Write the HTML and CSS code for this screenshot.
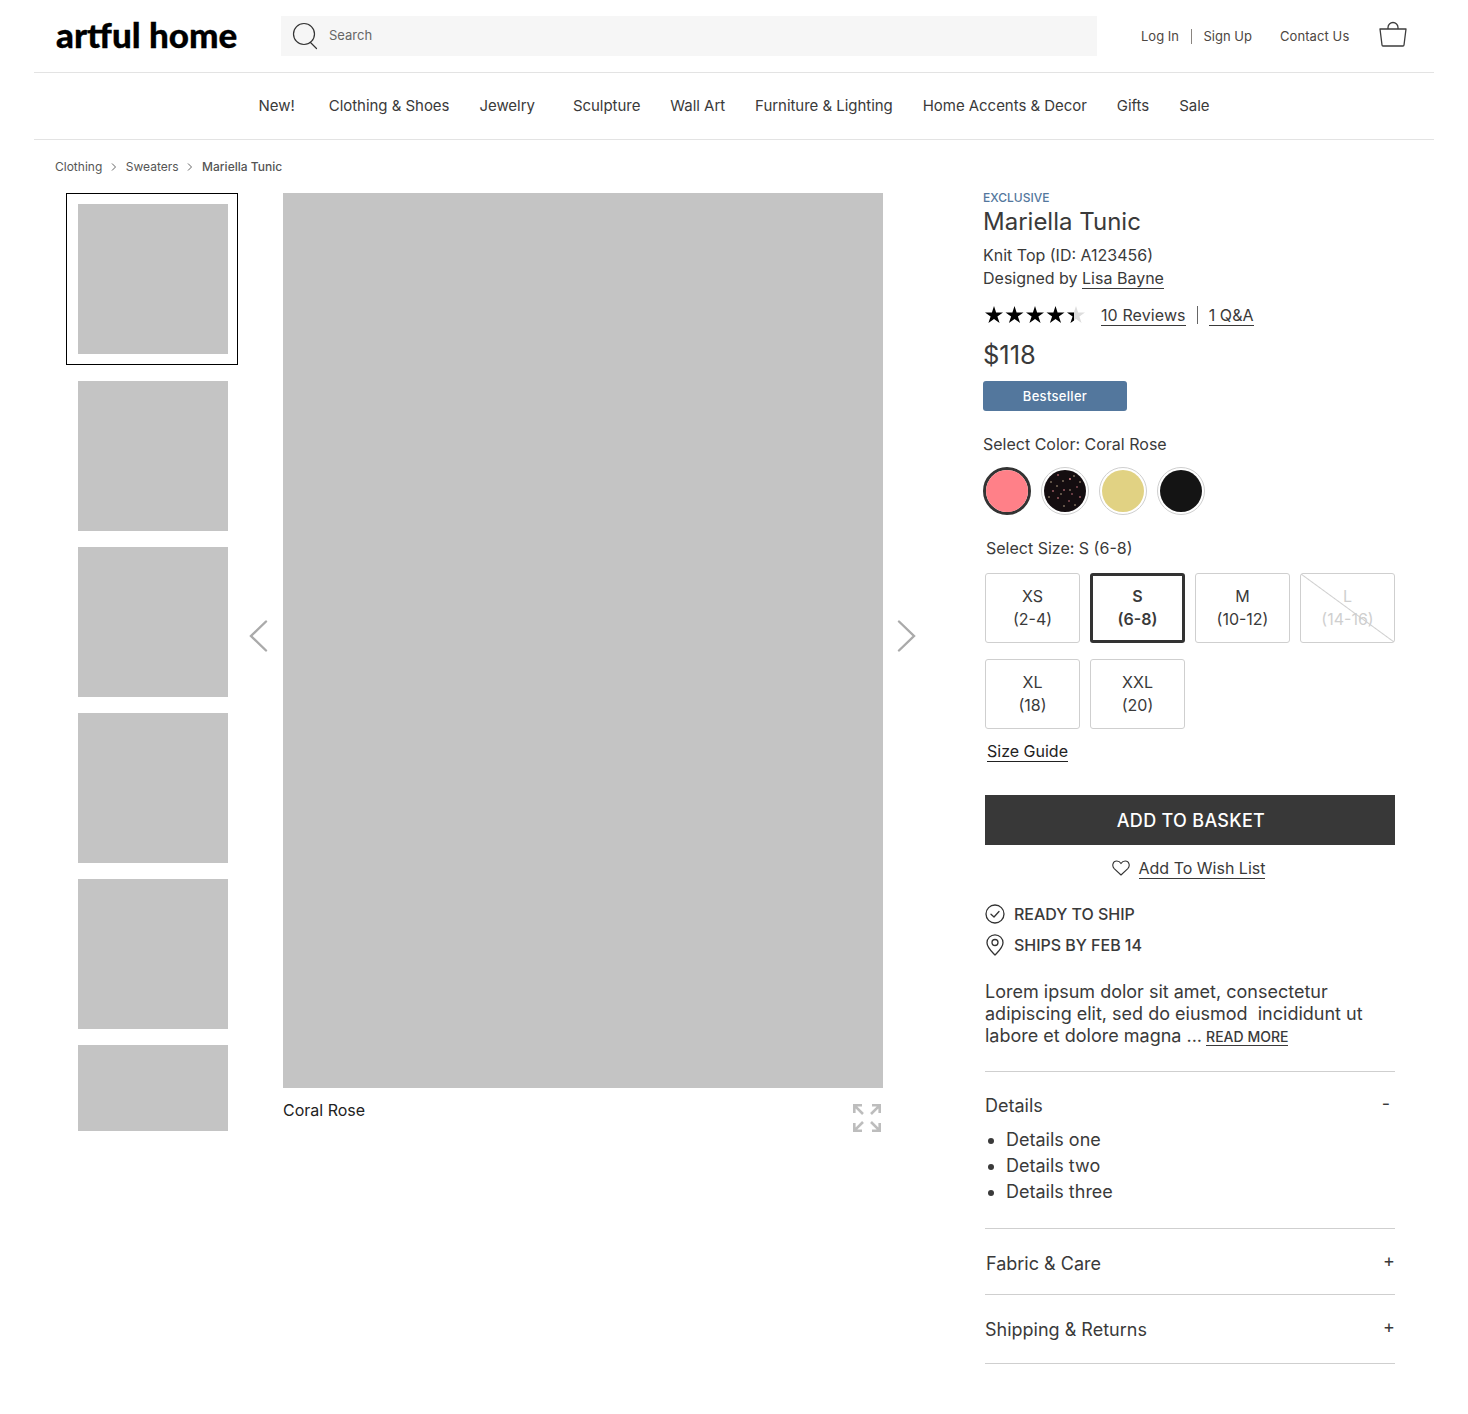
FILE: index.html
```html
<!DOCTYPE html>
<html lang="en">
<head>
    <meta name="viewport" content="width=device-width, initial-scale=1.0">
    <meta charset="UTF-8">
    <title>Mariella Tunic - artful home</title>
    <link rel="stylesheet" href="styles.css">
</head>
<body>

<!-- Header -->
<header class="site-header">
    <div class="top-bar">
        <a class="logo" href="#">artful home</a>
        <div class="search">
            <svg class="search-icon" width="26" height="28" viewBox="0 0 26 28" fill="none" stroke="#333" stroke-width="1.2">
                <circle cx="12" cy="12" r="10.5"/>
                <path d="M18.5 20.5 L24.5 26.5" stroke-linecap="round"/>
            </svg>
            <span>Search</span>
        </div>
        <div class="account-links">
            <a href="#">Log In</a>
            <span class="account-divider"></span>
            <a href="#">Sign Up</a>
            <a class="contact-link" href="#">Contact Us</a>
        </div>
        <svg class="bag-icon" width="28" height="26" viewBox="0 0 28 26" fill="none" stroke="#3d3d3d" stroke-width="1.3" stroke-linejoin="round">
            <path d="M1 8 H27 L25 24 Q24.900 25 24 25 H4 Q3.100 25 3 24 Z"/>
            <path d="M9 8 V6.500 A5 5 0 0 1 19 6.500 V8"/>
        </svg>
    </div>
    <nav class="main-nav">
        <a class="nav-new" href="#">New!</a>
        <a href="#">Clothing &amp; Shoes</a>
        <a class="nav-jewelry" href="#">Jewelry</a>
        <a href="#">Sculpture</a>
        <a href="#">Wall Art</a>
        <a href="#">Furniture &amp; Lighting</a>
        <a href="#">Home Accents &amp; Decor</a>
        <a href="#">Gifts</a>
        <a href="#">Sale</a>
    </nav>
</header>

<!-- Breadcrumb -->
<div class="breadcrumb">
    <a href="#">Clothing</a>
    <svg width="6" height="8" viewBox="0 0 6 8" fill="none" stroke="#666"><path d="M1 0.500 L4.500 4 L1 7.500"/></svg>
    <a href="#">Sweaters</a>
    <svg width="6" height="8" viewBox="0 0 6 8" fill="none" stroke="#666"><path d="M1 0.500 L4.500 4 L1 7.500"/></svg>
    <span class="breadcrumb-current">Mariella Tunic</span>
</div>

<main class="product">
    <!-- Thumbnails -->
    <div class="thumbs">
        <div class="thumb thumb-selected"><div class="thumb-img"></div></div>
        <div class="thumb"><div class="thumb-img"></div></div>
        <div class="thumb"><div class="thumb-img"></div></div>
        <div class="thumb"><div class="thumb-img"></div></div>
        <div class="thumb"><div class="thumb-img"></div></div>
        <div class="thumb"><div class="thumb-img"></div></div>
    </div>

    <!-- Main image -->
    <div class="gallery">
        <div class="gallery-row">
            <svg class="arrow arrow-prev" width="20" height="32" viewBox="0 0 20 32" fill="none" stroke="#aaa" stroke-width="2.4" stroke-linecap="round">
                <path d="M17 1.500 L2 16 L17 30.500"/>
            </svg>
            <div class="gallery-img"></div>
            <svg class="arrow arrow-next" width="20" height="32" viewBox="0 0 20 32" fill="none" stroke="#aaa" stroke-width="2.4" stroke-linecap="round">
                <path d="M3 1.500 L18 16 L3 30.500"/>
            </svg>
        </div>
        <div class="gallery-caption">
            <span>Coral Rose</span>
            <svg width="28" height="28" viewBox="0 0 28 28" fill="none" stroke="#bdbdbd" stroke-width="2.6">
                <path d="M1.300 9 V1.300 H9 M1.300 1.300 L10 10"/>
                <path d="M19 1.300 H26.700 V9 M26.700 1.300 L18 10"/>
                <path d="M1.300 19 V26.700 H9 M1.300 26.700 L10 18"/>
                <path d="M19 26.700 H26.700 V19 M26.700 26.700 L18 18"/>
            </svg>
        </div>
    </div>

    <!-- Product info -->
    <section class="info">
        <div class="info-top">
            <div class="eyebrow">EXCLUSIVE</div>
            <h1 class="title">Mariella Tunic</h1>
            <div class="meta meta-first">Knit Top (ID: A123456)</div>
            <div class="meta">Designed by <a class="link" href="#">Lisa Bayne</a></div>
            <div class="rating">
                <svg class="stars" width="102" height="18" viewBox="0 0 102 18">
                    <defs>
                        <clipPath id="half-star"><rect x="82" y="0" width="7" height="18"/></clipPath>
                    </defs>
                    <path d="M9 0 L11.100 6.400 H18 L12.400 10.400 L14.600 17 L9 13 L3.400 17 L5.600 10.400 L0 6.400 H6.900 Z" fill="#000"/>
                    <path transform="translate(20.500 0)" d="M9 0 L11.100 6.400 H18 L12.400 10.400 L14.600 17 L9 13 L3.400 17 L5.600 10.400 L0 6.400 H6.900 Z" fill="#000"/>
                    <path transform="translate(41 0)" d="M9 0 L11.100 6.400 H18 L12.400 10.400 L14.600 17 L9 13 L3.400 17 L5.600 10.400 L0 6.400 H6.900 Z" fill="#000"/>
                    <path transform="translate(61.500 0)" d="M9 0 L11.100 6.400 H18 L12.400 10.400 L14.600 17 L9 13 L3.400 17 L5.600 10.400 L0 6.400 H6.900 Z" fill="#000"/>
                    <path transform="translate(82 0)" d="M9 0 L11.100 6.400 H18 L12.400 10.400 L14.600 17 L9 13 L3.400 17 L5.600 10.400 L0 6.400 H6.900 Z" fill="#ddd"/>
                    <g clip-path="url(#half-star)">
                        <path transform="translate(82 0)" d="M9 0 L11.100 6.400 H18 L12.400 10.400 L14.600 17 L9 13 L3.400 17 L5.600 10.400 L0 6.400 H6.900 Z" fill="#000"/>
                    </g>
                </svg>
                <a class="link" href="#">10 Reviews</a>
                <span class="rating-divider"></span>
                <a class="link" href="#">1 Q&amp;A</a>
            </div>
            <div class="price">$118</div>
            <div class="badge">Bestseller</div>
            <div class="option-label">Select Color: Coral Rose</div>
            <div class="swatches">
                <div class="swatch swatch-selected"><div class="swatch-fill fill-coral"></div></div>
                <div class="swatch">
                    <svg class="swatch-fill" viewBox="0 0 42 42">
                        <rect width="42" height="42" fill="#140d10"/>
                        <g fill="#f58f99">
                            <circle cx="14" cy="5" r=".8"/><circle cx="26" cy="9" r=".9"/><circle cx="9" cy="21" r=".8"/>
                            <circle cx="20" cy="20" r=".8"/><circle cx="33" cy="17" r=".7"/><circle cx="14" cy="28" r=".8"/>
                            <circle cx="25" cy="31" r=".7"/><circle cx="36" cy="27" r=".8"/><circle cx="28" cy="24" r=".7"/>
                        </g>
                        <g fill="#e8cfa8">
                            <circle cx="7" cy="12" r=".7"/><circle cx="19" cy="11" r=".7"/><circle cx="30" cy="6" r=".7"/>
                            <circle cx="26" cy="20" r=".7"/><circle cx="5" cy="27" r=".7"/><circle cx="20" cy="36" r=".7"/>
                            <circle cx="31" cy="35" r=".7"/><circle cx="13" cy="16" r=".7"/><circle cx="36" cy="12" r=".7"/>
                            <circle cx="17" cy="24" r=".7"/>
                        </g>
                    </svg>
                </div>
                <div class="swatch"><div class="swatch-fill fill-straw"></div></div>
                <div class="swatch"><div class="swatch-fill fill-black"></div></div>
            </div>
        </div>

        <div class="option-label size-label">Select Size: S (6-8)</div>
        <div class="sizes">
            <div class="size">XS<br>(2-4)</div>
            <div class="size size-selected">S<br>(6-8)</div>
            <div class="size">M<br>(10-12)</div>
            <div class="size size-out">L<br>(14-16)</div>
            <div class="size">XL<br>(18)</div>
            <div class="size">XXL<br>(20)</div>
        </div>
        <a class="link size-guide" href="#">Size Guide</a>

        <button class="add-basket">ADD TO BASKET</button>

        <div class="wish">
            <svg width="18" height="16" viewBox="0 0 18 16" fill="none" stroke="#333" stroke-width="1.1" stroke-linejoin="round">
                <path d="M9 15 L2.200 8.600 C-0.300 6.100 0.600 1 4.800 1 C6.800 1 8.200 2.200 9 3.600 C9.800 2.200 11.200 1 13.200 1 C17.400 1 18.300 6.100 15.800 8.600 Z"/>
            </svg>
            <a class="link" href="#">Add To Wish List</a>
        </div>

        <div class="ship-row">
            <svg width="20" height="20" viewBox="0 0 20 20" fill="none" stroke="#333" stroke-width="1.3">
                <circle cx="10" cy="10" r="9"/>
                <path d="M6 10.300 L9 13 L14 7.500" stroke-linecap="round" stroke-linejoin="round"/>
            </svg>
            <span>READY TO SHIP</span>
        </div>
        <div class="ship-row">
            <svg width="20" height="22" viewBox="0 0 20 22" fill="none" stroke="#333" stroke-width="1.3">
                <path d="M10 21 C6 17 2 13.500 2 8.800 A8 8 0 0 1 18 8.800 C18 13.500 14 17 10 21 Z" stroke-linejoin="round"/>
                <circle cx="10" cy="8.500" r="3"/>
            </svg>
            <span>SHIPS BY FEB 14</span>
        </div>

        <p class="description">Lorem ipsum dolor sit amet, consectetur adipiscing elit, sed do eiusmod &nbsp;incididunt ut labore et dolore magna ... <a class="link read-more" href="#">READ MORE</a></p>

        <!-- Accordion -->
        <div class="accordion accordion-open">
            <div class="accordion-head"><span>Details</span><span class="accordion-minus">-</span></div>
            <ul class="details-list">
                <li>Details one</li>
                <li>Details two</li>
                <li>Details three</li>
            </ul>
        </div>
        <div class="accordion accordion-fabric">
            <div class="accordion-head"><span>Fabric &amp; Care</span><span class="accordion-plus">+</span></div>
        </div>
        <div class="accordion accordion-shipping">
            <div class="accordion-head"><span>Shipping &amp; Returns</span><span class="accordion-plus">+</span></div>
        </div>
    </section>
</main>

</body>
</html>
```

FILE: styles.css
```css
:root {
    --text-color: #3a3a3a;
    --link-color: #4d4742;
    --rule-color: #e3e3e3;
    --box-color: #cfcfcf;
    --placeholder: #c4c4c4;
    --blue: #53779d;
}

* {
    box-sizing: border-box;
}

body {
    margin: 0;
    height: 1414px;
    background: #fff;
    color: var(--text-color);
    font-family: Inter, "Liberation Sans", sans-serif;
    overflow: hidden;
}

a {
    color: inherit;
    text-decoration: none;
}

/* Header */
.site-header {
    margin: 0 34px;
}

.top-bar {
    display: flex;
    align-items: center;
    height: 73px;
    padding: 0 27px 0 22px;
    border-bottom: 1px solid var(--rule-color);
}

.logo {
    width: 225px;
    margin-top: -4px;
    color: #000;
    font-family: Lato, sans-serif;
    font-size: 35px;
    font-weight: 900;
    -webkit-text-stroke: .3px #000;
    white-space: nowrap;
}

.search {
    display: flex;
    align-items: center;
    width: 816px;
    height: 40px;
    margin-top: -1px;
    padding-left: 11px;
    background: #f6f6f6;
    color: #666;
    font-size: 13px;
}

.search span {
    margin-top: -2px;
}

.search-icon {
    margin-right: 11px;
}

.account-links {
    display: flex;
    align-items: center;
    margin-left: 44px;
    color: var(--link-color);
    font-size: 13px;
}

.account-divider {
    width: 1px;
    height: 15px;
    margin: 0 11.500px 0 12px;
    background: #8a8580;
}

.contact-link {
    margin-left: 28px;
    letter-spacing: .1px;
}

.bag-icon {
    margin-left: auto;
    margin-top: -4px;
}

.main-nav {
    display: flex;
    justify-content: center;
    align-items: center;
    gap: 30px;
    height: 67px;
    padding-bottom: 1px;
    border-bottom: 1px solid var(--rule-color);
    font-size: 15px;
    letter-spacing: -.04px;
}

.nav-new {
    margin-right: 4px;
}

.nav-jewelry {
    margin-right: 8px;
}

/* Breadcrumb */
.breadcrumb {
    display: flex;
    align-items: center;
    gap: 8.750px;
    height: 53px;
    padding-left: 55px;
    color: #555;
    font-size: 12px;
}

.breadcrumb-current {
    font-weight: 500;
}

/* Layout */
.product {
    display: flex;
    align-items: flex-start;
    padding-left: 66px;
}

/* Thumbnails */
.thumbs {
    display: flex;
    flex-direction: column;
    gap: 16px;
    width: 172px;
    height: 938px;
    overflow: hidden;
}

.thumb {
    flex: none;
    display: flex;
    justify-content: center;
    padding-left: 2px;
}

.thumb-selected {
    padding: 10px 0 10px 2px;
    border: 1px solid #000;
}

.thumb-img {
    width: 150px;
    height: 150px;
    background: var(--placeholder);
}

/* Main image */
.gallery {
    margin-left: 11px;
}

.gallery-row {
    display: flex;
    align-items: center;
    gap: 14px;
}

.arrow {
    flex: none;
    margin-bottom: 9px;
}

.arrow-next {
    margin-left: -1px;
}

.gallery-img {
    width: 600px;
    height: 895px;
    background: var(--placeholder);
}

.gallery-caption {
    display: flex;
    justify-content: space-between;
    align-items: flex-start;
    margin: 0 33px 0 34px;
    padding: 12px 2px 0 0;
    color: #222;
    font-size: 16px;
}

.gallery-caption svg {
    margin-top: 4px;
}

/* Info column */
.info {
    width: 412px;
    margin-left: 67px;
    padding-left: 2px;
    font-size: 16px;
}

.info-top {
    margin-left: -2px;
}

.eyebrow {
    margin-top: -2px;
    color: var(--blue);
    font-size: 12px;
    font-weight: 500;
    line-height: 14px;
}

.title {
    margin: 2px 0 0;
    font-size: 24px;
    font-weight: 400;
    line-height: 29px;
}

.meta {
    height: 23px;
    line-height: 23px;
}

.meta-first {
    margin-top: 8px;
}

.link {
    border-bottom: 1px solid currentColor;
}

.rating {
    display: flex;
    align-items: center;
    height: 24px;
    margin-top: 13px;
    padding-left: 2px;
    letter-spacing: .1px;
}

.stars {
    margin-right: 14px;
}

.rating-divider {
    width: 1px;
    height: 18px;
    margin: 0 11px;
    background: #666;
}

.price {
    margin-top: 13px;
    font-size: 25.500px;
    line-height: 30px;
}

.badge {
    width: 144px;
    height: 30px;
    margin-top: 11px;
    background: var(--blue);
    border-radius: 3px;
    color: #fff;
    font-size: 13px;
    font-weight: 500;
    letter-spacing: .3px;
    line-height: 30px;
    text-align: center;
}

.option-label {
    margin-top: 23px;
    line-height: 20px;
}

.swatches {
    display: flex;
    gap: 10px;
    margin-top: 13px;
}

.swatch {
    width: 48px;
    height: 48px;
    padding: 2px;
    border: 1px solid var(--box-color);
    border-radius: 50%;
}

.swatch-selected {
    padding: 0;
    border: 3px solid #333;
}

.swatch-fill {
    display: block;
    width: 100%;
    height: 100%;
    border-radius: 50%;
}

.fill-coral {
    background: #ff8088;
}

.fill-straw {
    background: #e1d283;
}

.fill-black {
    background: #141414;
}

.size-label {
    margin: 23px 0 0 1px;
}

.sizes {
    display: grid;
    grid-template-columns: repeat(4, 95px);
    gap: 16px 10px;
    margin-top: 15px;
}

.size {
    height: 70px;
    padding-top: 11px;
    border: 1px solid var(--box-color);
    border-radius: 3px;
    line-height: 23px;
    text-align: center;
}

.size-selected {
    padding-top: 9px;
    border: 3px solid #333;
    font-weight: 600;
}

.size-out {
    color: #cfcfcf;
    background: linear-gradient(to bottom left, transparent calc(50% - 1px), #cfcfcf 50%, transparent calc(50% + 1px));
}

.size-guide {
    display: inline-block;
    margin: 13px 0 0 2px;
    color: #222;
    line-height: 19px;
}

.add-basket {
    display: block;
    width: 410px;
    height: 50px;
    margin-top: 33px;
    padding: 0 0 0 2px;
    background: #383838;
    border: none;
    color: #fff;
    font-family: inherit;
    font-size: 18px;
    font-weight: 500;
    letter-spacing: .3px;
}

.wish {
    display: flex;
    justify-content: center;
    align-items: center;
    gap: 9px;
    width: 410px;
    height: 24px;
    margin-top: 11px;
    padding-right: 3px;
}

.wish .link {
    line-height: 20px;
}

.ship-row {
    display: flex;
    align-items: center;
    gap: 9px;
    height: 31px;
    font-weight: 500;
    letter-spacing: -.03px;
}

.wish + .ship-row {
    margin-top: 18px;
}

.description {
    width: 410px;
    margin: 21px 0 0;
    font-size: 18px;
    line-height: 22px;
}

.read-more {
    margin-left: -1px;
    font-size: 14px;
    font-weight: 500;
}

/* Accordion */
.accordion {
    width: 410px;
    border-top: 1px solid var(--box-color);
}

.accordion-open {
    height: 157px;
    margin-top: 23px;
    padding-top: 23px;
}

.accordion-fabric {
    height: 66px;
    padding: 24px 0 0 1px;
}

.accordion-shipping {
    height: 70px;
    padding-top: 24px;
    border-bottom: 1px solid var(--box-color);
}

.accordion-head {
    display: flex;
    justify-content: space-between;
    font-size: 18px;
    line-height: 22px;
}

.accordion-minus {
    margin: -2px 5px 0 0;
    font-size: 18px;
}

.accordion-plus {
    margin-top: -3px;
    font-size: 18px;
}

.details-list {
    margin: 10px 0 0;
    padding-left: 21px;
    font-size: 18px;
    line-height: 26px;
}
```
